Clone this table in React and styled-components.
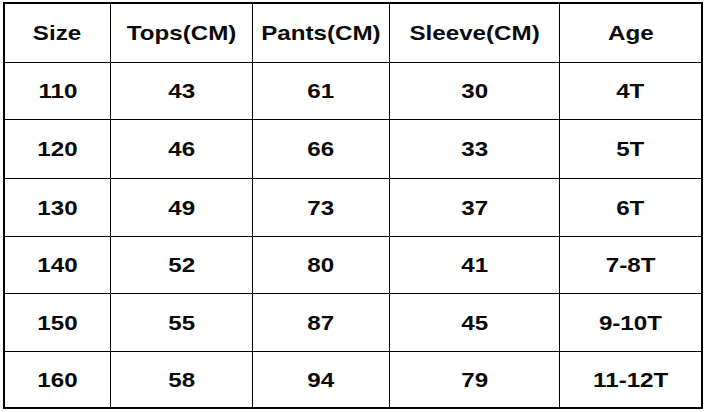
import React from "react";
import styled, { createGlobalStyle } from "styled-components";

const GlobalStyle = createGlobalStyle`
  html, body {
    margin: 0;
    padding: 0;
    background: #fff;
  }
`;

const Page = styled.div`
  padding: 2px 0 0 3px;
  font-family: "Liberation Sans", Arial, sans-serif;
`;

const Table = styled.table`
  border: 2px solid #000;
  border-collapse: separate;
  border-spacing: 0;
  table-layout: fixed;
  width: 700px;
`;

const Cell = styled.td`
  box-sizing: border-box;
  height: ${(p) => p.$h}px;
  padding: 0;
  text-align: center;
  vertical-align: middle;
  border-right: ${(p) => (p.$lastCol ? "none" : "1px solid #000")};
  border-bottom: ${(p) => (p.$lastRow ? "none" : "1px solid #000")};
`;

const Label = styled.span`
  display: inline-block;
  font-size: 21px;
  font-weight: bold;
  color: #0a0a0a;
  transform: scaleX(1.15);
`;

const widths = [106, 142, 137, 170, 141];
const heights = [59, 57, 59, 58, 57, 58, 55];

const header = ["Size", "Tops(CM)", "Pants(CM)", "Sleeve(CM)", "Age"];

const rows = [
  ["110", "43", "61", "30", "4T"],
  ["120", "46", "66", "33", "5T"],
  ["130", "49", "73", "37", "6T"],
  ["140", "52", "80", "41", "7-8T"],
  ["150", "55", "87", "45", "9-10T"],
  ["160", "58", "94", "79", "11-12T"],
];

export default function App() {
  const all = [header, ...rows];
  return (
    <Page>
      <GlobalStyle />
      <Table>
        <colgroup>
          {widths.map((w, i) => (
            <col key={i} style={{ width: w }} />
          ))}
        </colgroup>
        <tbody>
          {all.map((row, r) => (
            <tr key={r}>
              {row.map((text, c) => (
                <Cell
                  key={c}
                  $h={heights[r]}
                  $lastCol={c === row.length - 1}
                  $lastRow={r === all.length - 1}
                >
                  <Label>{text}</Label>
                </Cell>
              ))}
            </tr>
          ))}
        </tbody>
      </Table>
    </Page>
  );
}
